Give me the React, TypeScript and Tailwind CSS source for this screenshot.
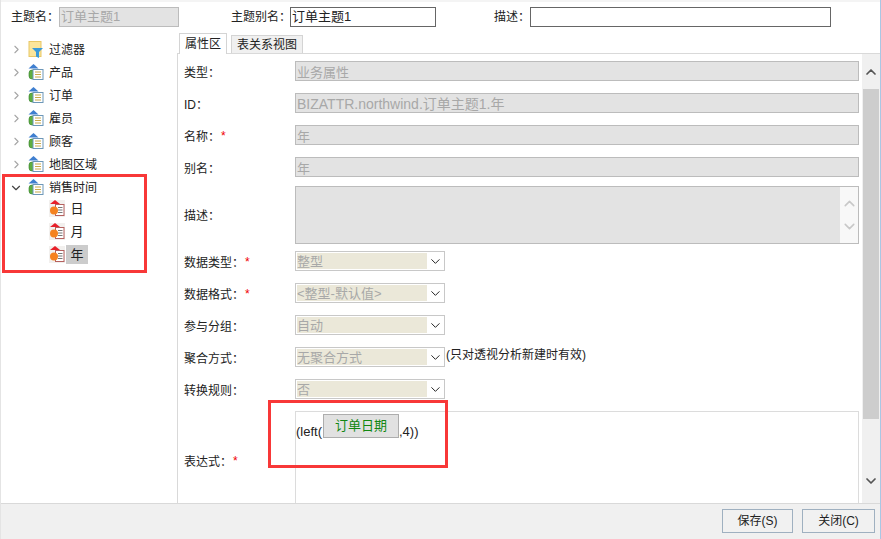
import { ChevronDown, ChevronRight, ChevronUp } from "lucide-react";

const FONT = "font-['Liberation_Sans','Noto_Sans_CJK_SC',sans-serif]";

const groups = ["产品", "订单", "雇员", "顾客", "地图区域"];

const FilterIcon = () => (
  <svg width="16" height="17" viewBox="0 0 16 17" className="shrink-0">
    <rect x="1" y="0.5" width="12" height="15" fill="#fbe59b" stroke="#e8c766" />
    <path d="M4 7h11l-4 4v6l-3-1.5V11z" fill="#3a9ad9" />
  </svg>
);

const GroupIcon = () => (
  <svg width="16" height="17" viewBox="0 0 16 17" className="shrink-0">
    <path d="M5.5 0l5 4.5H0.5z" fill="#3f7fd0" />
    <rect x="1" y="6" width="6" height="9" rx="3" fill="#5fae3f" stroke="#2f7d2a" strokeWidth="0.6" />
    <rect x="5" y="5.5" width="10" height="10" fill="#fff" stroke="#6d97b8" />
    <path d="M7 8h6M7 10.5h6M7 13h6" stroke="#c9a94a" strokeWidth="1" />
  </svg>
);

const FieldIcon = () => (
  <svg width="16" height="17" viewBox="0 0 16 17" className="shrink-0">
    <rect width="16" height="17" fill="#f2f0ee" />
    <path d="M6 0l5 4H1z" fill="#e8202a" />
    <rect x="6.5" y="4.5" width="8.5" height="11" fill="#fff" stroke="#b5615f" />
    <path d="M9 7.5h4.5M9 10h4.5M9 12.5h4.5" stroke="#777" strokeWidth="1" />
    <circle cx="5" cy="10.5" r="4" fill="#f5821f" />
  </svg>
);

const Star = () => <span className="text-[#f00000] ml-[1px] -mt-[2px]">*</span>;

const Label = ({ text, required }: { text: string; required?: boolean }) => (
  <div className="w-[111px] h-5 shrink-0 flex items-center text-[#222] mt-[2px]">
    {text}
    {required && <Star />}
  </div>
);

const ReadOnlyRow = ({ label, value, required, wide }: { label: string; value: string; required?: boolean; wide?: boolean }) => (
  <div className="flex h-5 mb-3 items-start">
    <Label text={label} required={required} />
    <div className={`w-[564px] h-5 border border-[#bcbcbc] bg-[#e3e3e3] text-[#a8a8a8] pl-[1px] leading-[21px] ${wide ? "text-[14px]" : "text-[13px]"}`}>
      {value}
    </div>
  </div>
);

const SelectRow = ({ label, value, required, note }: { label: string; value: string; required?: boolean; note?: string }) => (
  <div className="flex h-5 mb-3 items-start">
    <Label text={label} required={required} />
    <div className="w-[150px] h-5 border border-[#c8c8c8] bg-white flex items-center p-[1px]">
      <div className="w-[131px] h-4 bg-[#ebe8d9] text-[#a8a8a8] leading-[18px] text-[13px] whitespace-nowrap">{value}</div>
      <ChevronDown size={15} strokeWidth={1.6} className="text-[#222] ml-[1px]" />
    </div>
    {note && <span className="text-[#222] ml-[1px] leading-4">{note}</span>}
  </div>
);

export default function App() {
  return (
    <div className={`${FONT} relative w-[881px] h-[539px] overflow-hidden bg-white text-xs flex flex-col border-r border-[#a9c7e4] border-l border-l-[#e4e4e4]`}>
      <div className="h-[2px] bg-[#f4f4f4]" />
      {/* top fields */}
      <div className="h-[30px] flex items-start pt-[5px] text-[#222] whitespace-nowrap">
        <span className="ml-[10px] w-[48px] leading-5">主题名：</span>
        <div className="w-[120px] h-5 border border-[#bcbcbc] bg-[#e3e3e3] text-[#a8a8a8] leading-[18px] pl-[1px] text-[13px]">订单主题1</div>
        <span className="ml-[52px] w-[59px] leading-5">主题别名：</span>
        <div className="w-[146px] h-5 border border-[#666] leading-[18px] pl-[1px] text-[13px]">订单主题1</div>
        <span className="ml-[58px] w-[36px] leading-5">描述：</span>
        <div className="w-[301px] h-5 border border-[#666]" />
      </div>
      <div className="flex flex-1 min-h-0">
        {/* tree */}
        <div className="w-[176px] shrink-0 pt-[6px] text-[#222]">
          <div className="h-[23px] flex items-center pl-[9px]">
            <ChevronRight size={13} strokeWidth={2} className="text-[#a6a6a6] mr-[5px]" />
            <FilterIcon />
            <span className="ml-[5px]">过滤器</span>
          </div>
          {groups.map((g) => (
            <div key={g} className="h-[23px] flex items-center pl-[9px]">
              <ChevronRight size={13} strokeWidth={2} className="text-[#a6a6a6] mr-[5px]" />
              <GroupIcon />
              <span className="ml-[5px]">{g}</span>
            </div>
          ))}
          <div className="h-[23px] flex items-center pl-[8px]">
            <ChevronDown size={14} strokeWidth={2} className="text-[#444] mr-[5px]" />
            <GroupIcon />
            <span className="ml-[5px]">销售时间</span>
          </div>
          <div className="-mt-[2px]">
            {["日", "月", "年"].map((f) => (
              <div key={f} className="h-[23px] flex items-center pl-[48px]">
                <FieldIcon />
                <span className={`ml-[1px] h-[19px] w-[22px] flex items-center justify-center text-[13px] ${f === "年" ? "bg-[#cccccc]" : ""}`}>{f}</span>
              </div>
            ))}
          </div>
        </div>
        {/* right side */}
        <div className="flex-1 min-w-0 flex flex-col">
          <div className="h-[21px] flex items-end shrink-0 pl-[2px] text-[#222]">
            <div className="h-[21px] w-[48px] border border-b-0 border-[#d4d4d4] bg-white flex items-center justify-center relative top-[1px]">属性区</div>
            <div className="h-[18px] w-[72px] ml-[4px] border border-b-0 border-[#d4d4d4] bg-[#f0f0f0] flex items-center justify-center">表关系视图</div>
          </div>
          <div className="flex-1 min-h-0 flex border-t border-l border-[#d9d9d9]">
            <div className="w-[684px] shrink-0 pt-[7px] pl-[6px] overflow-hidden">
              <ReadOnlyRow label="类型：" value="业务属性" />
              <ReadOnlyRow label="ID：" value="BIZATTR.northwind.订单主题1.年" wide />
              <ReadOnlyRow label="名称：" value="年" required />
              <ReadOnlyRow label="别名：" value="年" />
              <div className="flex h-[58px] mb-[7px] -mt-[3px]">
                <div className="w-[111px] shrink-0 flex items-center text-[#222] pt-[1px]">描述：</div>
                <div className="w-[564px] h-[58px] border border-[#bcbcbc] bg-[#e3e3e3] flex justify-end">
                  <div className="w-[18px] bg-[#f8f8f8] flex flex-col items-center justify-center gap-[6px] text-[#c8c8c8]">
                    <ChevronUp size={17} strokeWidth={2.2} />
                    <ChevronDown size={17} strokeWidth={2.2} />
                  </div>
                </div>
              </div>
              <SelectRow label="数据类型：" value="整型" required />
              <SelectRow label="数据格式：" value="<整型-默认值>" required />
              <SelectRow label="参与分组：" value="自动" />
              <SelectRow label="聚合方式：" value="无聚合方式" note="(只对透视分析新建时有效)" />
              <SelectRow label="转换规则：" value="否" />
              <div className="flex h-[92px]">
                <div className="w-[111px] shrink-0 flex items-center text-[#222] pt-[9px]">
                  表达式：
                  <Star />
                </div>
                <div className="w-[564px] h-[92px] border border-b-0 border-[#dcdcdc] pt-[2px] flex items-start text-[13px] text-[#222]">
                  <span className="mt-[9px] w-[27px]">(left(</span>
                  <span className="w-[76px] h-6 border border-[#adadad] bg-[#e1e1e1] text-[#118811] text-[13px] flex items-center justify-center">订单日期</span>
                  <span className="mt-[9px]">,4))</span>
                </div>
              </div>
            </div>
            {/* scrollbar */}
            <div className="w-[18px] bg-[#f0f0f0] flex flex-col items-center">
              <div className="h-[35px] flex items-center justify-center text-[#555]">
                <ChevronUp size={16} strokeWidth={2.6} />
              </div>
              <div className="w-[16px] h-[330px] bg-[#cdcdcd]" />
              <div className="flex-1 flex items-end pb-[14px] text-[#555]">
                <ChevronDown size={16} strokeWidth={2.6} />
              </div>
            </div>
          </div>
        </div>
      </div>
      {/* footer */}
      <div className="h-9 shrink-0 bg-[#f0f0f0] border-t border-[#d9d9d9] flex items-start justify-end pt-[5px] pr-[5px] gap-[9px] text-[#222]">
        <button className="w-[71px] h-6 border border-[#9fb0c0] bg-[#f1f1f1]">保存(S)</button>
        <button className="w-[73px] h-6 border border-[#9fb0c0] bg-[#f1f1f1]">关闭(C)</button>
      </div>
      {/* red annotation boxes */}
      <div className="absolute left-[1px] top-[174px] w-[145px] h-[99px] border-[3px] border-[#f83838]" />
      <div className="absolute left-[267px] top-[400px] w-[180px] h-[68px] border-[3px] border-[#f83838]" />
    </div>
  );
}
